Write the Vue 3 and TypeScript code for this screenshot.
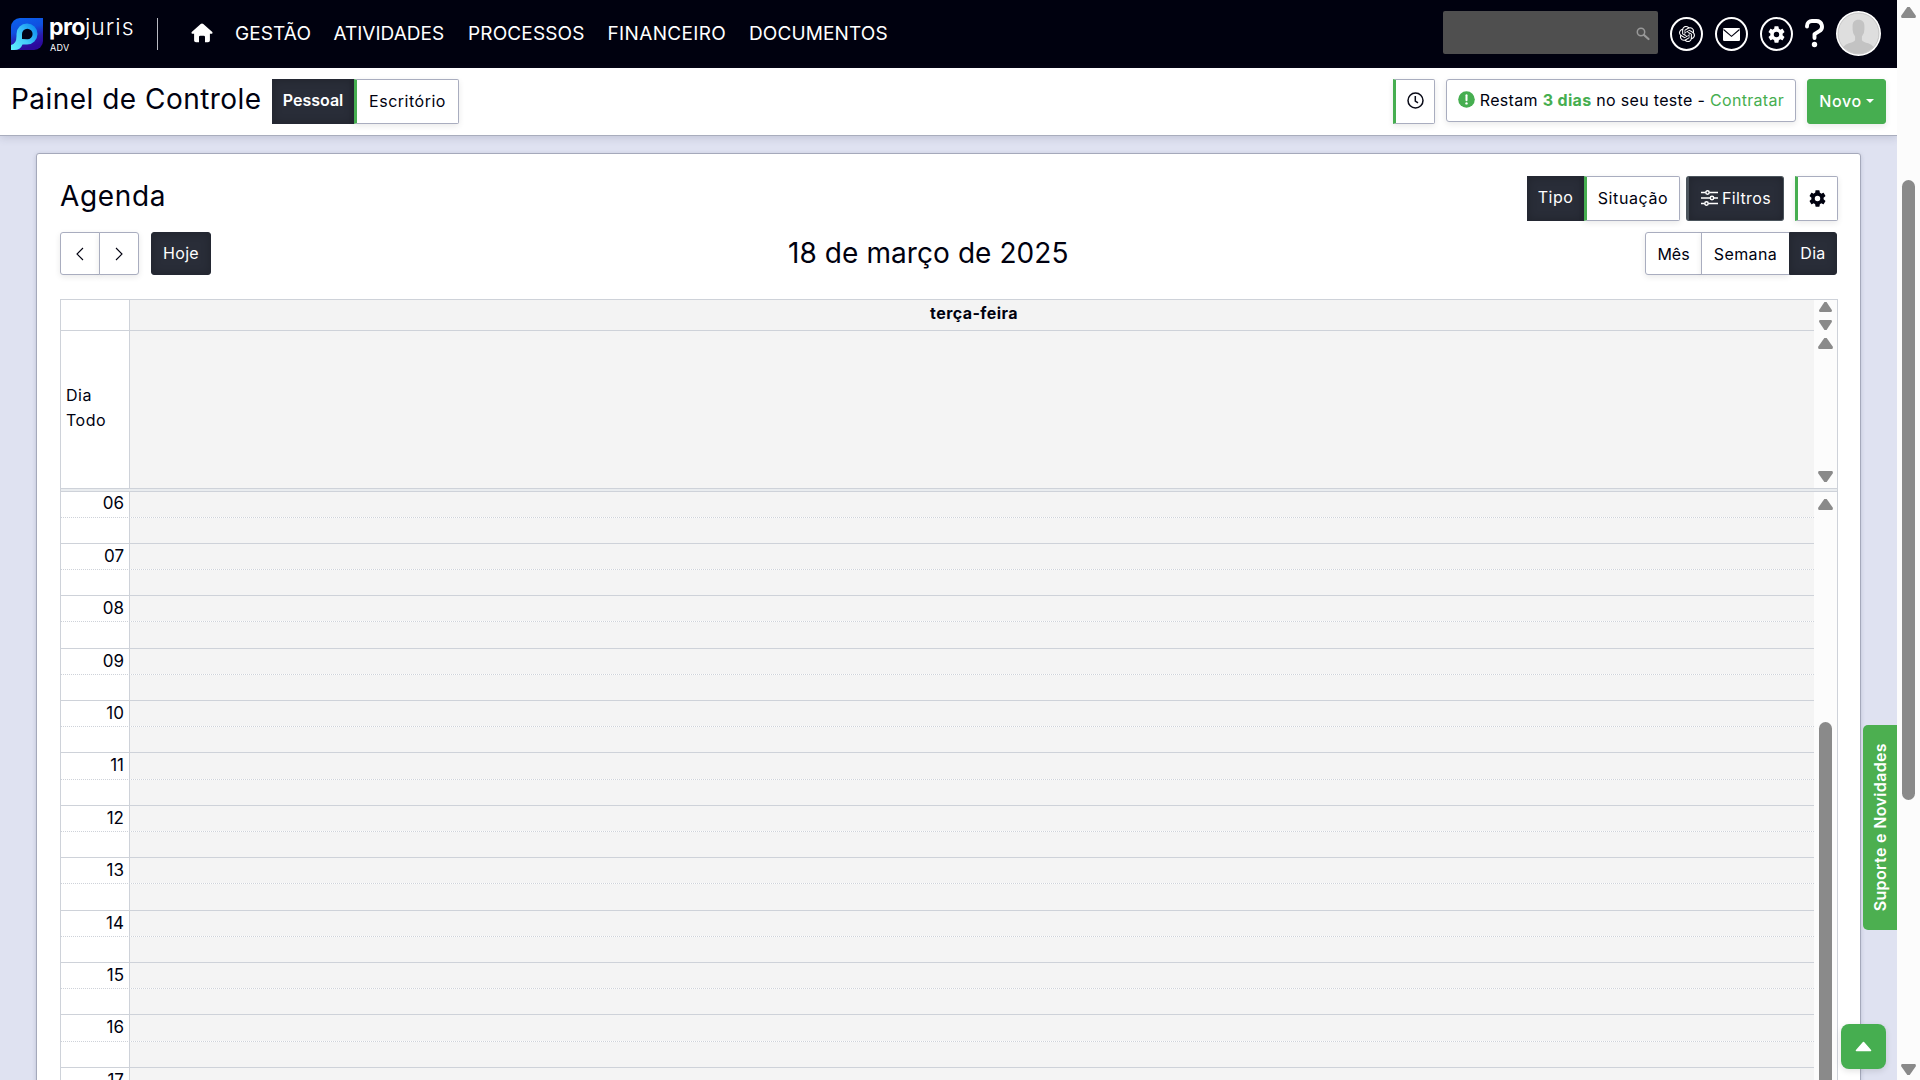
<script setup lang="ts">
const menu = [
  { label: 'GESTÃO', width: 75, spacing: 0.1 },
  { label: 'ATIVIDADES', width: 111, spacing: 0 },
  { label: 'PROCESSOS', width: 116, spacing: 0.15 },
  { label: 'FINANCEIRO', width: 118, spacing: 0.35 },
  { label: 'DOCUMENTOS', width: 139, spacing: 0.12 },
]
const hours: string[] = Array.from({ length: 12 }, (_, i) => String(i + 6).padStart(2, '0'))
</script>

<template>
  <div class="screen">
    <div class="page">
      <header class="topbar">
        <svg class="logo" width="32" height="32" viewBox="0 0 32 32">
          <defs>
            <linearGradient id="bg" x1="0" y1="0" x2="0.3" y2="1">
              <stop offset="0" stop-color="#0a62ee" />
              <stop offset="0.45" stop-color="#1050e0" />
              <stop offset="0.75" stop-color="#2a1cae" />
              <stop offset="1" stop-color="#2c0a9c" />
            </linearGradient>
            <linearGradient id="pg" x1="0" y1="1" x2="1" y2="0.2">
              <stop offset="0" stop-color="#62f0ff" />
              <stop offset="0.5" stop-color="#45ccfa" />
              <stop offset="1" stop-color="#0d8cf0" />
            </linearGradient>
          </defs>
          <path d="M9 0H32V23A9 9 0 0 1 23 32H0V9A9 9 0 0 1 9 0Z" fill="url(#bg)" />
          <path d="M0 32V27Q5.500 26 5.500 18V16A10.500 10.500 0 1 1 16 26.500H11.500Q9.500 32 3 32Z" fill="url(#pg)" />
          <path d="M11 21V16A5.300 5.300 0 1 1 16.300 21.300Z" fill="#020318" />
        </svg>
        <div class="brand">
          <div class="brand-name"><b>pro</b><span>juris</span></div>
          <div class="brand-sub">ADV</div>
        </div>
        <i class="divider"></i>
        <svg class="home" width="22" height="20" viewBox="0 0 22 20">
          <path d="M11 0.500Q11.700 0.500 12.300 1L21.300 9Q22 10 21 10.800H18.900V17.500Q18.900 19.300 17 19.300H14V14Q14 12.800 12.800 12.800H9.200Q8 12.800 8 14V19.300H5Q3.100 19.300 3.100 17.500V10.800H1Q0 10 0.700 9L9.700 1Q10.300 0.500 11 0.500Z" fill="#fff" />
        </svg>
        <nav class="menu">
          <a v-for="m in menu" :key="m.label" :style="{ width: m.width + 'px', letterSpacing: m.spacing + 'px' }">{{ m.label }}</a>
        </nav>
        <div class="search">
          <svg width="14" height="14" viewBox="0 0 14 14" fill="none">
            <circle cx="5" cy="5" r="3.700" stroke="#999" stroke-width="1.500" />
            <path d="M8 8L12.500 12" stroke="#999" stroke-width="2.200" stroke-linecap="round" />
          </svg>
        </div>
        <div class="ring">
          <svg width="16" height="16" viewBox="0 0 24 24" fill="#fff"><path d="M22.282 9.821a5.985 5.985 0 0 0-.516-4.910 6.046 6.046 0 0 0-6.510-2.900A6.065 6.065 0 0 0 4.981 4.182a5.985 5.985 0 0 0-3.998 2.900 6.046 6.046 0 0 0 .743 7.097 5.980 5.980 0 0 0 .510 4.911 6.051 6.051 0 0 0 6.515 2.900A5.985 5.985 0 0 0 13.260 24a6.056 6.056 0 0 0 5.772-4.206 5.990 5.990 0 0 0 3.998-2.900 6.056 6.056 0 0 0-.747-7.073zM13.260 22.430a4.476 4.476 0 0 1-2.876-1.040l.141-.081 4.779-2.758a.795.795 0 0 0 .392-.681v-6.737l2.020 1.169a.071.071 0 0 1 .038.052v5.583a4.504 4.504 0 0 1-4.494 4.494zM3.600 18.304a4.470 4.470 0 0 1-.535-3.014l.142.085 4.783 2.759a.771.771 0 0 0 .780 0l5.843-3.369v2.332a.080.080 0 0 1-.033.062L9.740 19.950a4.500 4.500 0 0 1-6.140-1.646zM2.341 7.896a4.485 4.485 0 0 1 2.365-1.973V11.600a.766.766 0 0 0 .388.676l5.815 3.355-2.020 1.168a.076.076 0 0 1-.071 0l-4.830-2.786A4.504 4.504 0 0 1 2.341 7.896zm16.597 3.855l-5.833-3.387L15.119 7.200a.076.076 0 0 1 .071 0l4.830 2.791a4.494 4.494 0 0 1-.676 8.105v-5.678a.790.790 0 0 0-.407-.667zm2.010-3.023l-.141-.085-4.774-2.782a.776.776 0 0 0-.785 0L9.409 9.230V6.897a.066.066 0 0 1 .028-.061l4.830-2.787a4.500 4.500 0 0 1 6.680 4.660zm-12.640 4.135l-2.020-1.164a.080.080 0 0 1-.038-.057V6.075a4.500 4.500 0 0 1 7.375-3.453l-.142.080L8.704 5.460a.795.795 0 0 0-.393.681zm1.097-2.365l2.602-1.500 2.607 1.500v2.999l-2.597 1.500-2.607-1.500z" /></svg>
        </div>
        <div class="ring">
          <svg width="17" height="13" viewBox="0 0 17 13"><rect width="17" height="13" rx="1.200" fill="#fff" /><path d="M0.500 1.500L8.500 8.300L16.500 1.500" fill="none" stroke="#00010f" stroke-width="1.100" /></svg>
        </div>
        <div class="ring">
          <svg width="17" height="17" viewBox="2 2 20 20" fill="#fff"><path d="M19.140 12.940c.040-.300.060-.610.060-.940 0-.320-.020-.640-.070-.940l2.030-1.580a.490.490 0 0 0 .120-.610l-1.920-3.320a.488.488 0 0 0-.590-.220l-2.390.960a7.020 7.020 0 0 0-1.620-.940l-.360-2.540a.484.484 0 0 0-.480-.410h-3.840c-.240 0-.430.170-.470.410l-.360 2.540c-.590.240-1.130.570-1.620.940l-2.390-.960c-.220-.080-.470 0-.590.220L2.740 8.870c-.120.210-.080.470.120.610l2.030 1.580c-.050.300-.090.630-.090.940s.020.640.070.940l-2.030 1.580a.490.490 0 0 0-.120.610l1.920 3.320c.120.220.370.290.590.220l2.390-.960c.500.380 1.030.700 1.620.940l.360 2.540c.050.240.240.410.480.410h3.840c.240 0 .440-.170.470-.410l.360-2.540c.590-.240 1.130-.560 1.620-.940l2.390.960c.220.080.470 0 .590-.220l1.920-3.320a.490.490 0 0 0-.120-.610l-2.010-1.580zM12 15.200A3.200 3.200 0 1 1 12 8.800a3.200 3.200 0 0 1 0 6.400z" /></svg>
        </div>
        <svg class="help" width="19" height="29" viewBox="0 0 19 29" fill="none">
          <path d="M2 7.500V7A5 5 0 0 1 7 2H11.500A5.500 5.500 0 0 1 14.300 12.200L9.500 15.200V19" stroke="#fff" stroke-width="3.900" stroke-linecap="round" stroke-linejoin="round" />
          <circle cx="9.500" cy="25.500" r="2.700" fill="#fff" />
        </svg>
        <svg class="avatar" width="45" height="45" viewBox="0 0 46 46">
          <defs><clipPath id="face"><circle cx="23" cy="23" r="20.500" /></clipPath></defs>
          <circle cx="23" cy="23" r="23" fill="#fff" />
          <circle cx="23" cy="23" r="21" fill="#dedede" stroke="#a9a9a9" stroke-width="0.600" />
          <path clip-path="url(#face)" d="M23 9C27.500 9 29.500 12 29 17Q29.500 23 26.500 26V30Q28 32 33 33Q40 35 41 44H5Q6 35 13 33Q18 32 19.500 30V26Q16.500 23 17 17C16.500 12 18.500 9 23 9Z" fill="#c3c3c3" />
        </svg>
      </header>

      <div class="subbar">
        <h1>Painel de Controle</h1>
        <div class="btn dark flat personal"><span>Pessoal</span></div>
        <div class="btn green-left office"><span>Escritório</span></div>
        <div class="grow"></div>
        <div class="btn green-left clock">
          <svg width="17" height="17" viewBox="0 0 17 17" fill="none" stroke="#0a0b18" stroke-width="1.500"><circle cx="8.500" cy="8.500" r="7.500" /><path d="M8.300 4V9L11 10.800" /></svg>
        </div>
        <div class="btn trial">
          <svg width="17" height="17" viewBox="0 0 17 17"><circle cx="8.500" cy="8.500" r="8.300" fill="#46ae50" /><path d="M8.500 4.200V9.300" stroke="#fff" stroke-width="2" stroke-linecap="round" /><circle cx="8.500" cy="12.400" r="1.200" fill="#fff" /></svg>
          <span class="trial-text">Restam <b>3 dias</b> no seu teste - <em>Contratar</em></span>
        </div>
        <div class="btn new"><span>Novo</span><i></i></div>
      </div>

      <main class="body">
        <section class="card">
          <div class="card-head">
            <h2>Agenda</h2>
            <div class="btn dark flat type"><span>Tipo</span></div>
            <div class="btn green-left status"><span>Situação</span></div>
            <div class="btn dark filters">
              <svg width="17" height="16" viewBox="0 0 17 16" fill="none" stroke="#fff" stroke-width="1.500">
                <path d="M0 2.500H4.500M8.500 2.500H17M0 8H9M13 8H17M0 13.500H3.500M7.500 13.500H17" />
                <circle cx="6.500" cy="2.500" r="1.700" /><circle cx="11" cy="8" r="1.700" /><circle cx="5.500" cy="13.500" r="1.700" />
              </svg>
              <span>Filtros</span>
            </div>
            <div class="btn green-left cog">
              <svg width="17" height="17" viewBox="2 2 20 20" fill="#00010f"><path d="M19.140 12.940c.040-.300.060-.610.060-.940 0-.320-.020-.640-.070-.940l2.030-1.580a.490.490 0 0 0 .120-.610l-1.920-3.320a.488.488 0 0 0-.590-.220l-2.390.960a7.020 7.020 0 0 0-1.620-.940l-.360-2.540a.484.484 0 0 0-.480-.410h-3.840c-.240 0-.430.170-.470.410l-.360 2.540c-.590.240-1.130.570-1.620.940l-2.390-.960c-.220-.080-.470 0-.590.220L2.740 8.870c-.120.210-.080.470.120.610l2.030 1.580c-.050.300-.090.630-.090.940s.020.640.070.940l-2.030 1.580a.490.490 0 0 0-.120.610l1.920 3.320c.120.220.370.290.590.220l2.390-.960c.500.380 1.030.700 1.620.940l.360 2.540c.050.240.240.410.480.410h3.840c.240 0 .440-.170.470-.410l.360-2.540c.590-.240 1.130-.560 1.620-.940l2.390.960c.220.080.470 0 .590-.220l1.920-3.320a.490.490 0 0 0-.120-.610l-2.010-1.580zM12 15.200A3.200 3.200 0 1 1 12 8.800a3.200 3.200 0 0 1 0 6.400z" /></svg>
            </div>
          </div>

          <div class="toolbar">
            <div class="btn prev"><svg width="8" height="14" viewBox="0 0 8 14" fill="none" stroke="#00010f" stroke-width="1.100"><path d="M7 1L1 7L7 13" /></svg></div>
            <div class="btn next"><svg width="8" height="14" viewBox="0 0 8 14" fill="none" stroke="#00010f" stroke-width="1.100"><path d="M1 1L7 7L1 13" /></svg></div>
            <div class="btn dark today"><span>Hoje</span></div>
            <div class="date"><span>18 de março de 2025</span></div>
            <div class="btn month"><span>Mês</span></div>
            <div class="btn week"><span>Semana</span></div>
            <div class="btn dark day"><span>Dia</span></div>
          </div>

          <div class="calendar">
            <div class="row weekday">
              <div class="axis"></div>
              <div class="cell"><b>terça-feira</b></div>
              <div class="gutter"><i class="tri up"></i><i class="tri down"></i></div>
            </div>
            <div class="row allday">
              <div class="axis">Dia<br />Todo</div>
              <div class="cell"></div>
              <div class="gutter"><i class="tri up"></i><i class="tri down"></i></div>
            </div>
            <div class="split"></div>
            <div class="row slots">
              <div class="times">
                <div v-for="(h, i) in hours" :key="h" class="hour" :class="{ first: i === 0 }">
                  <div class="slot"><div class="axis"><span>{{ h }}</span></div><div class="cell"></div></div>
                  <div class="slot minor"><div class="axis"></div><div class="cell"></div></div>
                </div>
              </div>
              <div class="gutter"><i class="tri up"></i><i class="thumb"></i></div>
            </div>
          </div>
        </section>
      </main>

      <div class="support"><span>Suporte e Novidades</span></div>
      <div class="to-top"><svg width="17" height="11" viewBox="0 0 17 11"><path d="M8.500 1.500L15.500 9.500H1.500Z" fill="#fff" stroke="#fff" stroke-width="1.600" stroke-linejoin="round" /></svg></div>
    </div>
    <div class="scrollbar"><i class="tri up"></i><i class="thumb"></i><i class="tri down"></i></div>
  </div>
</template>

<style>
html, body { margin: 0; overflow: hidden; }
</style>

<style scoped>
* { box-sizing: border-box; }
.screen { display: flex; width: 1920px; height: 1080px; overflow: hidden; font-family: Inter, "Liberation Sans", sans-serif; font-size: 16px; color: #00010f; background: #dfe2f1; }
.page { position: relative; display: flex; flex-direction: column; width: 1897px; height: 1080px; overflow: hidden; }
.topbar { display: flex; align-items: flex-start; flex: none; height: 68px; padding-left: 11px; background: #00010f; color: #fff; }
.logo { margin-top: 18px; flex: none; }
.brand { width: 107px; margin: 13px 0 0 6px; flex: none; }
.brand + .divider { margin-left: 1px; }
.brand-name { height: 28px; line-height: 28px; font-size: 23px; white-space: nowrap; }
.brand-name b { font-weight: 700; letter-spacing: -0.5px; }
.brand-name span { font-weight: 300; letter-spacing: 1px; }
.brand-sub { padding-left: 1px; font-size: 9px; line-height: 14px; letter-spacing: 0.3px; }
.divider { width: 1px; height: 32px; margin-top: 18px; background: #b9bac2; }
.home { margin: 23px 0 0 33px; flex: none; }
.menu { display: flex; gap: 23.500px; margin: 20px 0 0 22px; }
.menu a { font-size: 19px; line-height: 27px; white-space: nowrap; }
.search { display: flex; justify-content: flex-end; width: 215px; height: 43px; margin: 11px 12px 0 auto; padding: 16px 8px 0 0; background: #4f4f4f; border-radius: 2px; flex: none; }
.ring { display: flex; align-items: center; justify-content: center; width: 33px; height: 34px; margin: 17px 12px 0 0; border: 2px solid #fff; border-radius: 50%; flex: none; }
.help { margin: 19px 12px 0 0; flex: none; }
.avatar { margin: 11px 16px 0 0; flex: none; }

.subbar { position: relative; display: flex; align-items: flex-start; flex: none; height: 68px; padding: 11px 11px 0 11px; background: #fff; border-bottom: 1px solid #a9adbd; box-shadow: 0 2px 8px rgba(60, 65, 100, 0.18); }
h1, h2 { margin: 0; font-weight: 400; font-size: 28px; line-height: 38px; white-space: nowrap; }
h1 { width: 261px; line-height: 41px; letter-spacing: 0.47px; }
.grow { flex: 1; }
.btn { display: flex; align-items: center; justify-content: center; flex: none; height: 45px; border: 1px solid #a9adbf; border-radius: 3px; background: #fff; box-shadow: 0 2px 6px rgba(0, 0, 0, 0.09); white-space: nowrap; }
.dark { background: #292d38; border-color: #242833; color: #fff; box-shadow: inset 0 0 10px rgba(0, 0, 0, 0.2); }
.dark span { position: relative; top: -1px; }
.flat { border-radius: 0; }
.green-left { border-left: 3px solid #46ae50; border-radius: 0 2px 2px 0; }
.personal { width: 82px; padding-bottom: 2px; font-weight: 600; }
.office { width: 105px; padding-bottom: 2px; letter-spacing: 0.5px; }
.clock { width: 42px; margin-right: 11px; padding-bottom: 2px; }
.trial { width: 350px; height: 43px; margin-right: 11px; padding-bottom: 2px; gap: 5px; letter-spacing: 0.32px; }
.trial b, .trial em { color: #46ae50; font-style: normal; }
.new { width: 79px; padding-bottom: 2px; gap: 4px; color: #fff; background: #46ae50; border-color: #46ae50; font-weight: 500; letter-spacing: 0.6px; }
.new i { border: 4px solid transparent; border-top-color: #fff; border-bottom: 0; }

.body { flex: 1; min-height: 0; padding: 17px 36px 0; }
.card { height: 1000px; padding: 22px 22px 0 23px; background: #fff; border: 1px solid #a5a9bb; border-radius: 3px; box-shadow: 0 1px 4px rgba(60, 65, 100, 0.2); }
.card-head { display: flex; height: 56px; }
h2 { flex: 1; line-height: 41px; letter-spacing: 0.65px; }
.type { width: 57px; padding-bottom: 2px; letter-spacing: 0.5px; }
.status { width: 96px; margin-right: 6px; padding-bottom: 1px; letter-spacing: 0.6px; }
.filters { width: 98px; margin-right: 11px; padding-bottom: 1px; gap: 4px; letter-spacing: 0.35px; border: 1px solid #4b545c; border-left-width: 3px; }
.filters span { top: 0; }
.cog { width: 43px; padding-bottom: 1px; }
.toolbar { display: flex; height: 67px; }
.toolbar .btn { height: 43px; }
.prev { width: 40px; border-radius: 3px 0 0 3px; }
.next { width: 40px; margin-left: -1px; border-radius: 0 3px 3px 0; }
.today { width: 60px; margin-left: 12px; letter-spacing: 0.35px; }
.date { flex: 1; padding-left: 577px; font-size: 28px; line-height: 43px; letter-spacing: 0.08px; }
.month { width: 57px; border-radius: 3px 0 0 3px; }
.week { width: 88px; margin-left: -1px; border-right: 0; border-radius: 0; letter-spacing: 0.4px; }
.day { width: 48px; margin-right: 1px; border-radius: 0 3px 3px 0; letter-spacing: 0.3px; }

.calendar { height: 820px; border: 1px solid #ced2d9; border-bottom: 0; }
.row { display: flex; }
.axis { width: 69px; flex: none; border-right: 1px solid #ced2d9; }
.cell { flex: 1; background: #f4f4f4; }
.gutter { position: relative; width: 23px; flex: none; background: #fcfcfc; }
.weekday { height: 30px; }
.weekday .cell { padding-left: 4px; text-align: center; font-size: 16px; line-height: 26px; letter-spacing: 0.42px; background: #f3f3f3; }
.allday { height: 158px; }
.allday .axis { display: flex; align-items: center; padding: 0 0 4px 5px; line-height: 25px; letter-spacing: 0.5px; border-top: 1px solid #ced2d9; }
.allday .cell { border-top: 1px solid #ced2d9; }
.split { position: relative; z-index: 1; height: 4px; background: #e9ecef; border-top: 1px solid #ced2d9; border-bottom: 1px solid #ced2d9; }
.slots { height: 600px; }
.times { flex: 1; margin-top: -1.6px; }
.hour { height: 52.4px; }
.slot { display: flex; height: 26.2px; border-top: 1px solid #ced2d9; }
.first .slot:first-child { border-top-color: transparent; }
.minor { border-top-style: dotted; }
.slot .axis { padding: 0 5px 0 0; text-align: right; line-height: 24px; font-size: 17px; }
.tri { position: absolute; width: 13px; height: 11px; background: #8a8a8a; clip-path: polygon(42% 0, 58% 0, 100% 82%, 96% 100%, 4% 100%, 0 82%); }
.tri.down { transform: rotate(180deg); }
.gutter .tri { left: 5px; }
.weekday .up { top: 2px; height: 10px; }
.weekday .down { top: 20px; height: 10px; }
.allday .up { top: 8px; left: 4px; width: 15px; }
.allday .down { top: 141px; left: 4px; width: 15px; }
.slots .up { top: 7px; left: 4px; width: 15px; }
.slots .thumb { position: absolute; top: 230px; left: 5px; width: 13px; height: 400px; border-radius: 7px; background: #8a8a8a; }

.support { position: absolute; right: 0; top: 725px; display: flex; align-items: center; justify-content: center; width: 34px; height: 205px; background: #4caf50; border-radius: 5px 0 0 5px; color: #fff; font-weight: 600; letter-spacing: 0.35px; }
.support span { writing-mode: vertical-rl; transform: rotate(180deg); white-space: nowrap; }
.to-top { position: absolute; left: 1841px; top: 1024px; display: flex; align-items: center; justify-content: center; width: 45px; height: 45px; border-radius: 8px; background: #46ae50; box-shadow: 0 2px 6px rgba(0, 0, 0, 0.12); }
.scrollbar { position: relative; width: 23px; height: 1080px; background: #fcfcfc; }
.scrollbar .tri { left: 4px; width: 15px; }
.scrollbar .up { top: 7px; }
.scrollbar .down { top: 1064px; }
.scrollbar .thumb { position: absolute; top: 180px; left: 5px; width: 13px; height: 620px; border-radius: 7px; background: #8a8a8a; }
</style>
